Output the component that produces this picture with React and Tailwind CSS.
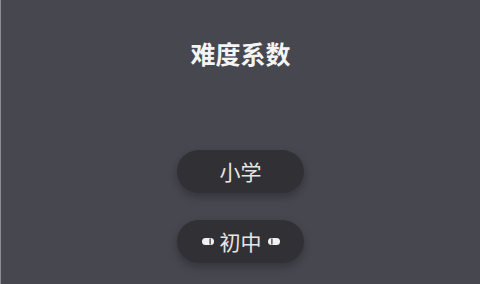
import React from 'react';

const CJK = { fontFamily: '"Noto Sans CJK SC", "Noto Sans", sans-serif' };

function Capsule({ flip }) {
  return (
    <svg width="12" height="7" viewBox="0 0 12 7" className={flip ? 'rotate-180' : ''}>
      <rect x="0" y="0" width="12" height="7" rx="3.5" fill="#f2f2f2" />
      <rect x="7.5" y="0.5" width="1.2" height="6" fill="#2f3034" />
    </svg>
  );
}

export default function App() {
  return (
    <div className="w-[480px] h-[284px] bg-[#46474f] border-l border-[#8a8c93] flex flex-col items-center overflow-hidden" style={CJK}>
      <h1 className="mt-[40px] text-[25px] leading-[26px] font-bold text-[#f4f4f4]">难度系数</h1>
      <div className="mt-[84px] flex flex-col items-center gap-[27px]">
        <button className="w-[127px] h-[43px] rounded-full bg-[#313135] shadow-[0_4px_8px_rgba(0,0,0,0.25)] flex items-center justify-center text-[21px] text-[#e6e6e6]">
          小学
        </button>
        <button className="w-[127px] h-[43px] rounded-full bg-[#313135] shadow-[0_4px_8px_rgba(0,0,0,0.25)] flex items-center justify-center gap-[6px] text-[21px] text-[#e6e6e6]">
          <Capsule />
          <span>初中</span>
          <Capsule flip />
        </button>
      </div>
    </div>
  );
}
